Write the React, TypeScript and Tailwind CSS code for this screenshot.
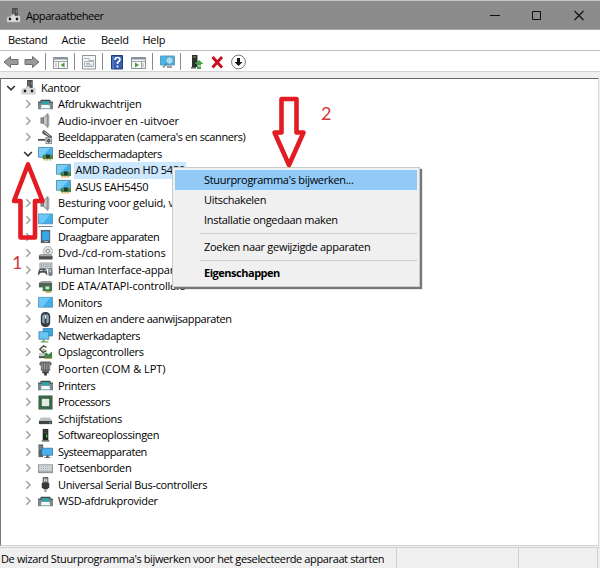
import type { ReactNode } from "react";
import { clsx } from "clsx";

type IconName =
  | "computer"
  | "printer"
  | "speaker"
  | "camera"
  | "display"
  | "monitor"
  | "pc"
  | "portable"
  | "dvd"
  | "hid"
  | "ide"
  | "mouse"
  | "network"
  | "storage"
  | "port"
  | "cpu"
  | "disk"
  | "software"
  | "system"
  | "keyboard"
  | "usb";

const icons: Record<IconName, ReactNode> = {
  computer: (
    <>
      <path d="M6.500 0h6v9h-6z" fill="#45484c" />
      <path d="M8 1.500h1v6H8zM10.500 1.500h1v4h-1z" fill="#85898c" />
      <path d="M1 10l5-1.500V7h3v1.500h6V15H1z" fill="#dcdddf" stroke="#b0b1b3" strokeWidth=".6" />
      <path d="M3 10.500h2.500V13H3zM10.500 10.500H13V13h-2.500z" fill="#15181b" />
    </>
  ),
  printer: (
    <>
      <path d="M3 3h10l1 2H2z" fill="#3e474c" />
      <path d="M0 5h16v8h-3V8H3v5H0z" fill="#7d8488" />
      <path d="M0 5h16v1H0z" fill="#454c50" />
      <path d="M4 4.500h8v3H4z" fill="#2ba8aa" />
      <path d="M3.500 8h9l1 4.500h-11z" fill="#f4f9f9" stroke="#538085" strokeWidth=".8" />
    </>
  ),
  speaker: (
    <>
      <path d="M3 5h3v6H3z" fill="#8a8e91" stroke="#65696d" strokeWidth=".6" />
      <path d="M6 5l4.500-4.500v15L6 11z" fill="#b5b8ba" stroke="#65696d" strokeWidth=".8" />
      <path d="M7.500 4.500v7" stroke="#e3e4e5" />
      <path d="M11.500 2v12" stroke="#8d9194" />
    </>
  ),
  camera: (
    <>
      <path d="M4.500 1.500L6.500 0 15 7l-1 2-9-5z" fill="#4b4e51" />
      <path d="M6.500 2l6 4.500" stroke="#e5e5e5" strokeWidth="1" />
      <path d="M0 9.500h8v2H0z" fill="#55585b" />
      <path d="M8 7.500h7V15H8z" fill="#85888a" />
      <path d="M9 9h5v5H9z" fill="#e3e5e6" />
      <circle cx="11.500" cy="11.500" r="1.500" fill="#777c80" stroke="#323537" />
    </>
  ),
  display: (
    <>
      <path d="M.5 1.500h15v10.500H.5z" fill="#42aee8" stroke="#457e9d" strokeWidth=".8" />
      <path d="M1 2h12L4 11.500H1z" fill="#78cdf7" />
      <path d="M5 9.500h11v4.500H5z" fill="#48864c" />
      <path d="M8.500 9h4v4h-4z" fill="#243b29" />
      <path d="M6 14h2v1.500H6zM9 14h2v1.500H9zM12 14h2v1.500h-2z" fill="#d2a13b" />
    </>
  ),
  monitor: (
    <>
      <path d="M.5 2.500h15v10.500H.5z" fill="#42b0eb" stroke="#4b87a5" strokeWidth=".8" />
      <path d="M1 3h12L5 12.500H1z" fill="#6ec8f7" />
    </>
  ),
  pc: (
    <>
      <path d="M.5 1h15v10.500H.5z" fill="#42b0eb" stroke="#4b87a5" strokeWidth=".8" />
      <path d="M1 1.500h12L5 11H1z" fill="#6ec8f7" />
      <path d="M.5 14h15v1H.5z" fill="#67747a" />
    </>
  ),
  portable: (
    <>
      <path d="M3 1h10v14H3z" fill="#52616b" />
      <path d="M4.500 2.500h7.500v9.500H4.500z" fill="#38a8ec" />
      <path d="M6.500 13h4v1h-4z" fill="#b9c4ca" />
    </>
  ),
  dvd: (
    <>
      <circle cx="10.500" cy="5.500" r="5" fill="#dcdfdf" stroke="#a3a8a9" strokeWidth=".8" />
      <circle cx="10.500" cy="5.500" r="1.800" fill="#fff" stroke="#737778" />
      <path d="M2 9h12l1.500 2v3.500H1V11z" fill="#4d5052" />
      <path d="M3 9h11l1 2H1.500z" fill="#a5a9aa" />
    </>
  ),
  hid: (
    <>
      <path d="M2 1h13v6H2z" fill="#d5d8da" stroke="#777d80" strokeWidth=".7" />
      <path d="M3 3h11M3 5h11" stroke="#7d8386" strokeDasharray="1.500 .8" />
      <path d="M0 14.500C0 10 1 7 3 7h4c2 0 3 3 3 7.500l-3-3H3z" fill="#4b555a" />
      <path d="M2 9h3M7 9h1.500" stroke="#d4e0e5" />
      <rect x="11" y="6.500" width="4.500" height="8.500" rx="2" fill="#768084" />
      <path d="M13 8v3" stroke="#fff" />
    </>
  ),
  ide: (
    <>
      <path d="M1 4l3-2h10l1 2z" fill="#9aa09c" />
      <path d="M1 4h14v5H1z" fill="#54615a" />
      <path d="M5 7h10v6H5z" fill="#397b45" />
      <path d="M8 8h4v3H8z" fill="#d5e4d6" />
      <path d="M8 13h6v1.500H8z" fill="#b58d3c" />
    </>
  ),
  mouse: (
    <>
      <rect x="3" y="0" width="10" height="16" rx="4.500" fill="#353b42" />
      <path d="M4.500 4L7 1.500v11L4.500 11zM9 1.500L11.500 4v7L9 12.500z" fill="#91a7b5" />
      <path d="M8 3v4" stroke="#e5f6ff" strokeWidth="1.400" />
    </>
  ),
  network: (
    <>
      <path d="M5.500.5h10v8h-10z" fill="#3ba8e6" stroke="#397ba3" strokeWidth=".8" />
      <path d="M1 4h10.500v8H1z" fill="#67c6f5" stroke="#397ba3" strokeWidth=".8" />
      <path d="M5 12h2v2h4v1.500H3V14h2z" fill="#6f9e5c" />
    </>
  ),
  storage: (
    <>
      <path d="M9 2.500L6 1 2 4.500 5.500 8 9 6" fill="none" stroke="#4b5346" strokeWidth="1.600" />
      <path d="M5 4h2v2H5z" fill="#849b54" />
      <path d="M1 8.500h7v5H1z" fill="#c7cbc9" />
      <path d="M1 12h13v2H1z" fill="#454d49" />
      <path d="M7 9l2-1 2 2 4-3v7H7z" fill="#418447" />
      <path d="M7 14h8v1H7z" fill="#c3a34a" />
    </>
  ),
  port: (
    <>
      <path d="M1.500 2L3 .5h10L14.500 2v2L13 5v5l-2 1H5l-2-1V5L1.500 4z" fill="#63676a" />
      <path d="M4.500 2.500V9M7 2.500V9M9.500 2.500V9M12 2.500V9" stroke="#b1b4b6" strokeWidth=".8" />
      <path d="M4.500 11h7v2H9.500v2.500h-3V13h-2z" fill="#3b3e40" />
    </>
  ),
  cpu: (
    <>
      <path d="M.5.5h15v15H.5z" fill="#315b3f" />
      <path d="M2 2h12v12H2z" fill="none" stroke="#5f8c68" strokeDasharray="1 1" />
      <path d="M4 4h8v8H4z" fill="#e1eae1" />
    </>
  ),
  disk: (
    <>
      <path d="M3 7h10l2 3.500H1z" fill="#c0c3c4" />
      <path d="M1 10.500h14V14H1z" fill="#3f4446" />
      <path d="M12 12.500h2" stroke="#77c68b" />
    </>
  ),
  software: (
    <>
      <path d="M5 1h6v12H5z" fill="#222925" />
      <path d="M6 3h4M6 5h4" stroke="#5a625d" strokeWidth=".8" />
      <path d="M8.500 7h1.500v3H8.500z" fill="#54c65e" />
      <path d="M4 13h8v1.500H4z" fill="#5b625d" />
    </>
  ),
  system: (
    <>
      <path d="M.5.5h5V14h-5z" fill="#596168" />
      <path d="M1.500 3h3M1.500 5h3" stroke="#b1b9be" strokeWidth=".8" />
      <path d="M4 4.500h11.500V12H4z" fill="#49b2f1" stroke="#346f94" strokeWidth=".8" />
      <path d="M8.500 12h3v2h2v1h-7v-1h2z" fill="#59666d" />
    </>
  ),
  keyboard: (
    <>
      <path d="M0 3.500h16V13H0z" fill="#92989c" />
      <path d="M1 4.500h14V11H1z" fill="#d7dbdd" />
      <path d="M1.500 6h13M1.500 8h13M1.500 10h13" stroke="#939a9e" strokeWidth=".8" strokeDasharray="1 1" />
    </>
  ),
  usb: (
    <>
      <path d="M5.500.5h5V6h-5z" fill="#8b8f92" stroke="#54585a" />
      <path d="M6.500 2.500h1v2h-1zM8.700 2.500h1v2h-1z" fill="#fff" />
      <path d="M4 6h8v5l-2 2H6l-2-2z" fill="#34383a" />
      <path d="M7 13h2v3H7z" fill="#84898c" />
    </>
  ),
};

type Row = {
  label: string;
  icon: IconName;
  level: number;
  state?: "open" | "closed";
  selected?: boolean;
  tracking?: string;
};

const rows: Row[] = [
  { label: "Kantoor", icon: "computer", level: 0, state: "open" },
  { label: "Afdrukwachtrijen", icon: "printer", level: 1, state: "closed" },
  { label: "Audio-invoer en -uitvoer", icon: "speaker", level: 1, state: "closed", tracking: "tracking-[-0.130px]" },
  { label: "Beeldapparaten (camera's en scanners)", icon: "camera", level: 1, state: "closed", tracking: "tracking-[-0.400px]" },
  { label: "Beeldschermadapters", icon: "display", level: 1, state: "open", tracking: "tracking-[-0.470px]" },
  { label: "AMD Radeon HD 5450", icon: "display", level: 2, selected: true, tracking: "tracking-[-0.240px]" },
  { label: "ASUS EAH5450", icon: "display", level: 2 },
  { label: "Besturing voor geluid, v", icon: "speaker", level: 1, state: "closed", tracking: "tracking-[-0.200px]" },
  { label: "Computer", icon: "pc", level: 1, state: "closed", tracking: "tracking-[-0.150px]" },
  { label: "Draagbare apparaten", icon: "portable", level: 1, state: "closed", tracking: "tracking-[-0.470px]" },
  { label: "Dvd-/cd-rom-stations", icon: "dvd", level: 1, state: "closed", tracking: "tracking-[-0.050px]" },
  { label: "Human Interface-apparaten", icon: "hid", level: 1, state: "closed", tracking: "tracking-[-0.200px]" },
  { label: "IDE ATA/ATAPI-controllers", icon: "ide", level: 1, state: "closed", tracking: "tracking-[-0.200px]" },
  { label: "Monitors", icon: "monitor", level: 1, state: "closed" },
  { label: "Muizen en andere aanwijsapparaten", icon: "mouse", level: 1, state: "closed", tracking: "tracking-[-0.400px]" },
  { label: "Netwerkadapters", icon: "network", level: 1, state: "closed", tracking: "tracking-[-0.450px]" },
  { label: "Opslagcontrollers", icon: "storage", level: 1, state: "closed" },
  { label: "Poorten (COM & LPT)", icon: "port", level: 1, state: "closed", tracking: "tracking-[-0.030px]" },
  { label: "Printers", icon: "printer", level: 1, state: "closed", tracking: "tracking-[-0.400px]" },
  { label: "Processors", icon: "cpu", level: 1, state: "closed", tracking: "tracking-[-0.400px]" },
  { label: "Schijfstations", icon: "disk", level: 1, state: "closed" },
  { label: "Softwareoplossingen", icon: "software", level: 1, state: "closed", tracking: "tracking-[-0.320px]" },
  { label: "Systeemapparaten", icon: "system", level: 1, state: "closed", tracking: "tracking-[-0.470px]" },
  { label: "Toetsenborden", icon: "keyboard", level: 1, state: "closed", tracking: "tracking-[-0.400px]" },
  { label: "Universal Serial Bus-controllers", icon: "usb", level: 1, state: "closed", tracking: "tracking-[-0.330px]" },
  { label: "WSD-afdrukprovider", icon: "printer", level: 1, state: "closed" },
];

function DeviceIcon({ name }: { name: IconName }) {
  return (
    <svg viewBox="0 0 16 16" className="h-[15px] w-[15px] shrink-0">
      {icons[name]}
    </svg>
  );
}

function Chevron({ state }: { state?: "open" | "closed" }) {
  return (
    <svg viewBox="0 0 10 10" className="h-[10px] w-[10px] shrink-0" fill="none">
      {state === "open" && <path d="M1.200 3L5 6.800 8.800 3" stroke="#333" strokeWidth="1.600" />}
      {state === "closed" && <path d="M3.300 1.200L7 5 3.300 8.800" stroke="#a0a0a0" strokeWidth="1.500" />}
    </svg>
  );
}

function TreeRow({ row }: { row: Row }) {
  return (
    <div
      className={clsx(
        "flex h-[16.56px] items-center",
        row.level === 0 && "pl-[5px]",
        row.level === 1 && "pl-[22px]",
        row.level === 2 && "pl-[39.500px]"
      )}
    >
      <Chevron state={row.state} />
      <span className="ml-[5px] flex">
        <DeviceIcon name={row.icon} />
      </span>
      <span
        className={clsx(
          "ml-[3px] flex h-full items-center pr-[1px] pl-[2px] whitespace-nowrap",
          row.selected && "bg-[#cce8ff]",
          row.tracking ?? "tracking-[-0.280px]"
        )}
      >
        {row.label}
      </span>
    </div>
  );
}

function TitleBar() {
  return (
    <header className="flex h-[30px] shrink-0 items-center border-t border-b border-t-[#c4c8c4] border-b-[#aaa] bg-[#8c8c8c] pl-[6px]">
      <DeviceIcon name="computer" />
      <span className="ml-[5px] pt-px tracking-[-0.430px]">Apparaatbeheer</span>
      <svg viewBox="0 0 100 12" className="mr-[15px] ml-auto h-[12px] w-[100px]" fill="none" stroke="#111">
        <path d="M5 6.500h10M47.500 2.500h8v8h-8z" />
        <path d="M89.500 2l9 9M98.500 2l-9 9" strokeWidth="1.200" />
      </svg>
    </header>
  );
}

function MenuBar() {
  return (
    <nav className="flex h-[21px] shrink-0 items-center border-b border-[#bcbcbc] bg-white pl-[8px] tracking-[-0.250px]">
      <span className="w-[53.500px] tracking-[-0.400px]">Bestand</span>
      <span className="w-[39.500px]">Actie</span>
      <span className="w-[41.500px]">Beeld</span>
      <span>Help</span>
    </nav>
  );
}

function ToolBar() {
  return (
    <div className="h-[21px] shrink-0 border-b border-[#d2d4d2] bg-white">
      <svg viewBox="0 0 260 20" className="h-[20px] w-[260px]" fill="none">
        <path d="M4 11l6.500-5.500v3h7.500v5h-7.500v3z" fill="#9a9a9a" stroke="#6e6e6e" />
        <path d="M39 11l-6.500-5.500v3h-7.500v5h7.500v3z" fill="#9a9a9a" stroke="#6e6e6e" />
        <path d="M45.500 2v17M74.500 2v17M102.500 2v17M152.500 2v17M180.500 2v17" stroke="#8b8b8b" />
        {/* console tree */}
        <path d="M53.500 6.500h14v11h-14z" fill="#f6f8f8" stroke="#8b9296" />
        <path d="M54 7.500h13" stroke="#8594a0" strokeWidth="2" />
        <path d="M58.500 10v7M54 10.500h13M55 13h2M55 15h2" stroke="#a2a9ad" />
        <path d="M64.500 11.500v5l-4-2.500z" fill="#4c9b42" />
        {/* properties */}
        <path d="M82.500 4.500h13v13.500h-13z" fill="#f4f6f7" stroke="#8b949a" />
        <path d="M84 7.500h5v2h5M84.500 10.500h9v5h-9zM86 12.500h4M86 14h6" stroke="#a6b1b8" />
        {/* help */}
        <path d="M111.500 4.500h11v13.500h-11z" fill="#355db1" stroke="#203e80" />
        <path d="M113 5v13" stroke="#6d8dd0" />
        <path d="M115 9q0-2.500 2.500-2.500t2.500 2q0 1.500-2.500 3v1.500M117.500 14.500v2" stroke="white" strokeWidth="1.600" />
        {/* action pane */}
        <path d="M131.500 6.500h14v11h-14z" fill="#f6f8f8" stroke="#8b9296" />
        <path d="M132 7.500h13" stroke="#8594a0" strokeWidth="2" />
        <path d="M141.500 10v7M132 10.500h13M142 13h2M142 15h2" stroke="#a2a9ad" />
        <path d="M135 11.500v5l4-2.500z" fill="#4c9b42" />
        {/* scan hardware */}
        <path d="M160.500 5h14v9h-14z" fill="#4ab5ed" stroke="#5c9dbd" />
        <path d="M167 14.500h5v2.500h-5z" fill="#99a2a7" />
        <circle cx="169.500" cy="9.500" r="3.800" fill="#a6def5" stroke="#5596b5" />
        <path d="M167 12.500l-4 4" stroke="#60879b" strokeWidth="1.500" />
        {/* update driver */}
        <path d="M192 4h5.500v12H192z" fill="#2c332e" />
        <path d="M191 16h5v1.500h-5z" fill="#59615b" />
        <path d="M193 6h3" stroke="#899389" />
        <path d="M194.500 13l4.500-4 4.500 4h-2.500v1.500h-4V13zM197 15.500h4V18h-4z" fill="#41a248" />
        <path d="M212.500 6l9.500 10.500M222 6l-9.500 10.500" stroke="#c90f1e" strokeWidth="2.900" />
        <circle cx="238.500" cy="11" r="6.900" fill="white" stroke="#777" />
        <path d="M237 7h3v4h2.500l-4 4-4-4h2.500z" fill="#111" />
      </svg>
    </div>
  );
}

function ContextMenu() {
  return (
    <div className="absolute top-[167px] left-[172px] h-[120px] w-[248px] border border-[#c8cbcc] bg-[#f0f0f0] px-[2px] pt-[2px] tracking-[-0.300px] whitespace-nowrap shadow-[2px_2px_1px_#777]">
      <div className="flex h-[20px] items-center bg-[#91c9f7] pl-[29px]">Stuurprogramma's bijwerken...</div>
      <div className="flex h-[20px] items-center pl-[29px]">Uitschakelen</div>
      <div className="flex h-[20px] items-center pl-[29px]">Installatie ongedaan maken</div>
      <div className="mt-[3px] ml-[25px] border-t border-[#cdcdcd]" />
      <div className="flex h-[26px] items-center pl-[29px]">Zoeken naar gewijzigde apparaten</div>
      <div className="ml-[25px] border-t border-[#cdcdcd]" />
      <div className="flex h-[24px] items-center pl-[29px] font-bold tracking-[-0.480px]">Eigenschappen</div>
    </div>
  );
}

export default function App() {
  return (
    <div className="relative flex h-[568px] w-[600px] flex-col overflow-hidden bg-[#f0f0f0] font-['Open_Sans','Noto_Sans',sans-serif] text-[11px] leading-[16px] text-black">
      <TitleBar />
      <MenuBar />
      <ToolBar />
      <main className="mt-[6px] mr-[1px] h-[468px] shrink-0 border border-t-[#666] border-r-[#d8dad8] border-b-[#d0d3d0] border-l-[#777] bg-white pt-[0.400px]">
        {rows.map((row) => (
          <TreeRow key={row.label} row={row} />
        ))}
      </main>
      <footer className="mt-[1px] flex flex-1 border-t border-[#d0d3d0]">
        <span className="flex w-[397px] shrink-0 items-center border-r border-[#d0d0d0] pt-px pl-[1px] tracking-[-0.380px] whitespace-nowrap">
          De wizard Stuurprogramma's bijwerken voor het geselecteerde apparaat starten
        </span>
        <span className="w-[122px] border-r border-[#d0d0d0]" />
        <span className="w-[79px] border-r border-[#d0d0d0]" />
      </footer>
      <ContextMenu />

      {/* numbered step arrows */}
      <svg viewBox="0 0 600 568" className="pointer-events-none absolute inset-0 h-full w-full" fill="none">
        <path
          d="M28 164.500L42.500 201H35V237.500H20.500V201H14Z"
          stroke="#e31b23"
          strokeWidth="4.600"
          strokeLinejoin="round"
        />
        <path
          d="M281.500 99H296.500V132.500H303.500L289 165L274.500 132.500H281.500Z"
          stroke="#e31b23"
          strokeWidth="4.600"
          strokeLinejoin="round"
        />
      </svg>
      <span className="absolute top-[254px] left-[12px] font-['Lato',sans-serif] text-[18px] text-[#d13a40]">1</span>
      <span className="absolute top-[105px] left-[321px] font-['Lato',sans-serif] text-[18px] text-[#d13a40]">2</span>
    </div>
  );
}
